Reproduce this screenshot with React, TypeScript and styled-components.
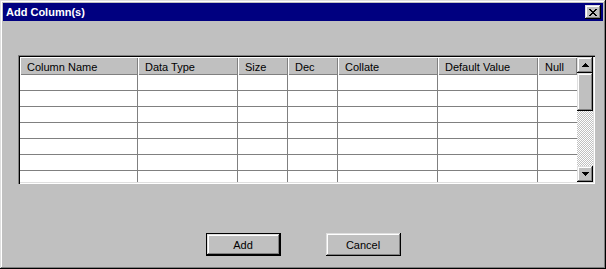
import styled, { createGlobalStyle } from "styled-components";

const GlobalStyle = createGlobalStyle`
  html, body {
    margin: 0;
    padding: 0;
    background: #c0c0c0;
  }
  body {
    font-family: "Liberation Sans", Arial, sans-serif;
    font-size: 11px;
    color: #000;
  }
  * {
    box-sizing: border-box;
  }
`;

const raised = `
  box-shadow: inset -1px -1px #000, inset 1px 1px #dfdfdf,
    inset -2px -2px #808080, inset 2px 2px #fff;
`;

const Window = styled.div`
  width: 606px;
  height: 269px;
  padding: 3px;
  display: flex;
  flex-direction: column;
  background: #c0c0c0;
  ${raised}
`;

const TitleBar = styled.div`
  height: 18px;
  flex: none;
  display: flex;
  align-items: center;
  justify-content: space-between;
  padding: 0 2px 0 3px;
  background: #000080;
  color: #fff;
  font-weight: bold;
  font-size: 11px;
`;

const TitleText = styled.span`
  line-height: 18px;
`;

const CloseButton = styled.button`
  width: 16px;
  height: 14px;
  padding: 0;
  border: 0;
  display: flex;
  align-items: center;
  justify-content: center;
  background: #c0c0c0;
  ${raised}
`;

const Body = styled.div`
  flex: 1;
  display: flex;
  flex-direction: column;
  padding: 34px 8px 0 15px;
`;

const GridFrame = styled.div`
  width: 577px;
  height: 129px;
  padding: 2px;
  display: flex;
  background: #fff;
  box-shadow: inset 1px 1px #808080, inset 2px 2px #000,
    inset -1px -1px #fff, inset -2px -2px #dfdfdf;
`;

const Table = styled.div<{ $columns: string }>`
  flex: 1;
  display: grid;
  grid-template-columns: ${(p) => p.$columns};
  grid-template-rows: 18px;
  grid-auto-rows: 16px;
  align-content: start;
  overflow: hidden;
`;

const HeaderCell = styled.div`
  display: flex;
  align-items: center;
  padding: 1px 0 0 7px;
  background: #c0c0c0;
  white-space: nowrap;
  overflow: hidden;
  box-shadow: inset 1px 1px #fff, inset -1px -1px #808080;
`;

const Cell = styled.div<{ $last: boolean }>`
  background: #fff;
  border-bottom: 1px solid #808080;
  border-right: ${(p) => (p.$last ? "0" : "1px solid #808080")};
`;

const ScrollBar = styled.div`
  width: 16px;
  flex: none;
  display: flex;
  flex-direction: column;
`;

const ScrollButton = styled.div`
  width: 16px;
  height: 16px;
  flex: none;
  display: flex;
  align-items: center;
  justify-content: center;
  background: #c0c0c0;
  ${raised}
`;

const Thumb = styled.div`
  height: 38px;
  flex: none;
  background: #c0c0c0;
  ${raised}
`;

const Track = styled.div`
  flex: 1;
  background: repeating-conic-gradient(#c0c0c0 0 25%, #fff 0 50%) 0 0 / 2px 2px;
`;

const Footer = styled.div`
  display: flex;
  justify-content: center;
  gap: 45px;
  margin: 49px 0 0 -7px;
`;

const Button = styled.button<{ $default?: boolean }>`
  width: 75px;
  height: 23px;
  padding: 0;
  font-family: "Liberation Sans", Arial, sans-serif;
  font-size: 11px;
  color: #000;
  background: #c0c0c0;
  border: ${(p) => (p.$default ? "1px solid #000" : "0")};
  ${raised}
`;

const Glyph = ({ rows }: { rows: string[] }) => (
  <svg width={rows[0].length} height={rows.length} shapeRendering="crispEdges">
    {rows.flatMap((row, y) =>
      row.split("").map((c, x) =>
        c === "#" ? <rect key={`${x}-${y}`} x={x} y={y} width={1} height={1} fill="#000" /> : null
      )
    )}
  </svg>
);

const closeGlyph = [
  "##....##",
  ".##..##.",
  "..####..",
  "...##...",
  "..####..",
  ".##..##.",
  "##....##",
];

const upGlyph = ["...#...", "..###..", ".#####.", "#######"];
const downGlyph = [...upGlyph].reverse();

const columns = [
  { label: "Column Name", width: 118 },
  { label: "Data Type", width: 100 },
  { label: "Size", width: 50 },
  { label: "Dec", width: 50 },
  { label: "Collate", width: 100 },
  { label: "Default Value", width: 100 },
  { label: "Null", width: 39 },
];

const rowCount = 7;

export default function App() {
  const template = columns.map((c) => `${c.width}px`).join(" ");
  return (
    <>
      <GlobalStyle />
      <Window>
        <TitleBar>
          <TitleText>Add Column(s)</TitleText>
          <CloseButton aria-label="Close">
            <Glyph rows={closeGlyph} />
          </CloseButton>
        </TitleBar>
        <Body>
          <GridFrame>
            <Table $columns={template}>
              {columns.map((c) => (
                <HeaderCell key={c.label}>{c.label}</HeaderCell>
              ))}
              {Array.from({ length: rowCount }).flatMap((_, r) =>
                columns.map((c, i) => (
                  <Cell key={`${r}-${c.label}`} $last={i === columns.length - 1} />
                ))
              )}
            </Table>
            <ScrollBar>
              <ScrollButton>
                <Glyph rows={upGlyph} />
              </ScrollButton>
              <Thumb />
              <Track />
              <ScrollButton>
                <Glyph rows={downGlyph} />
              </ScrollButton>
            </ScrollBar>
          </GridFrame>
          <Footer>
            <Button $default>Add</Button>
            <Button>Cancel</Button>
          </Footer>
        </Body>
      </Window>
    </>
  );
}
